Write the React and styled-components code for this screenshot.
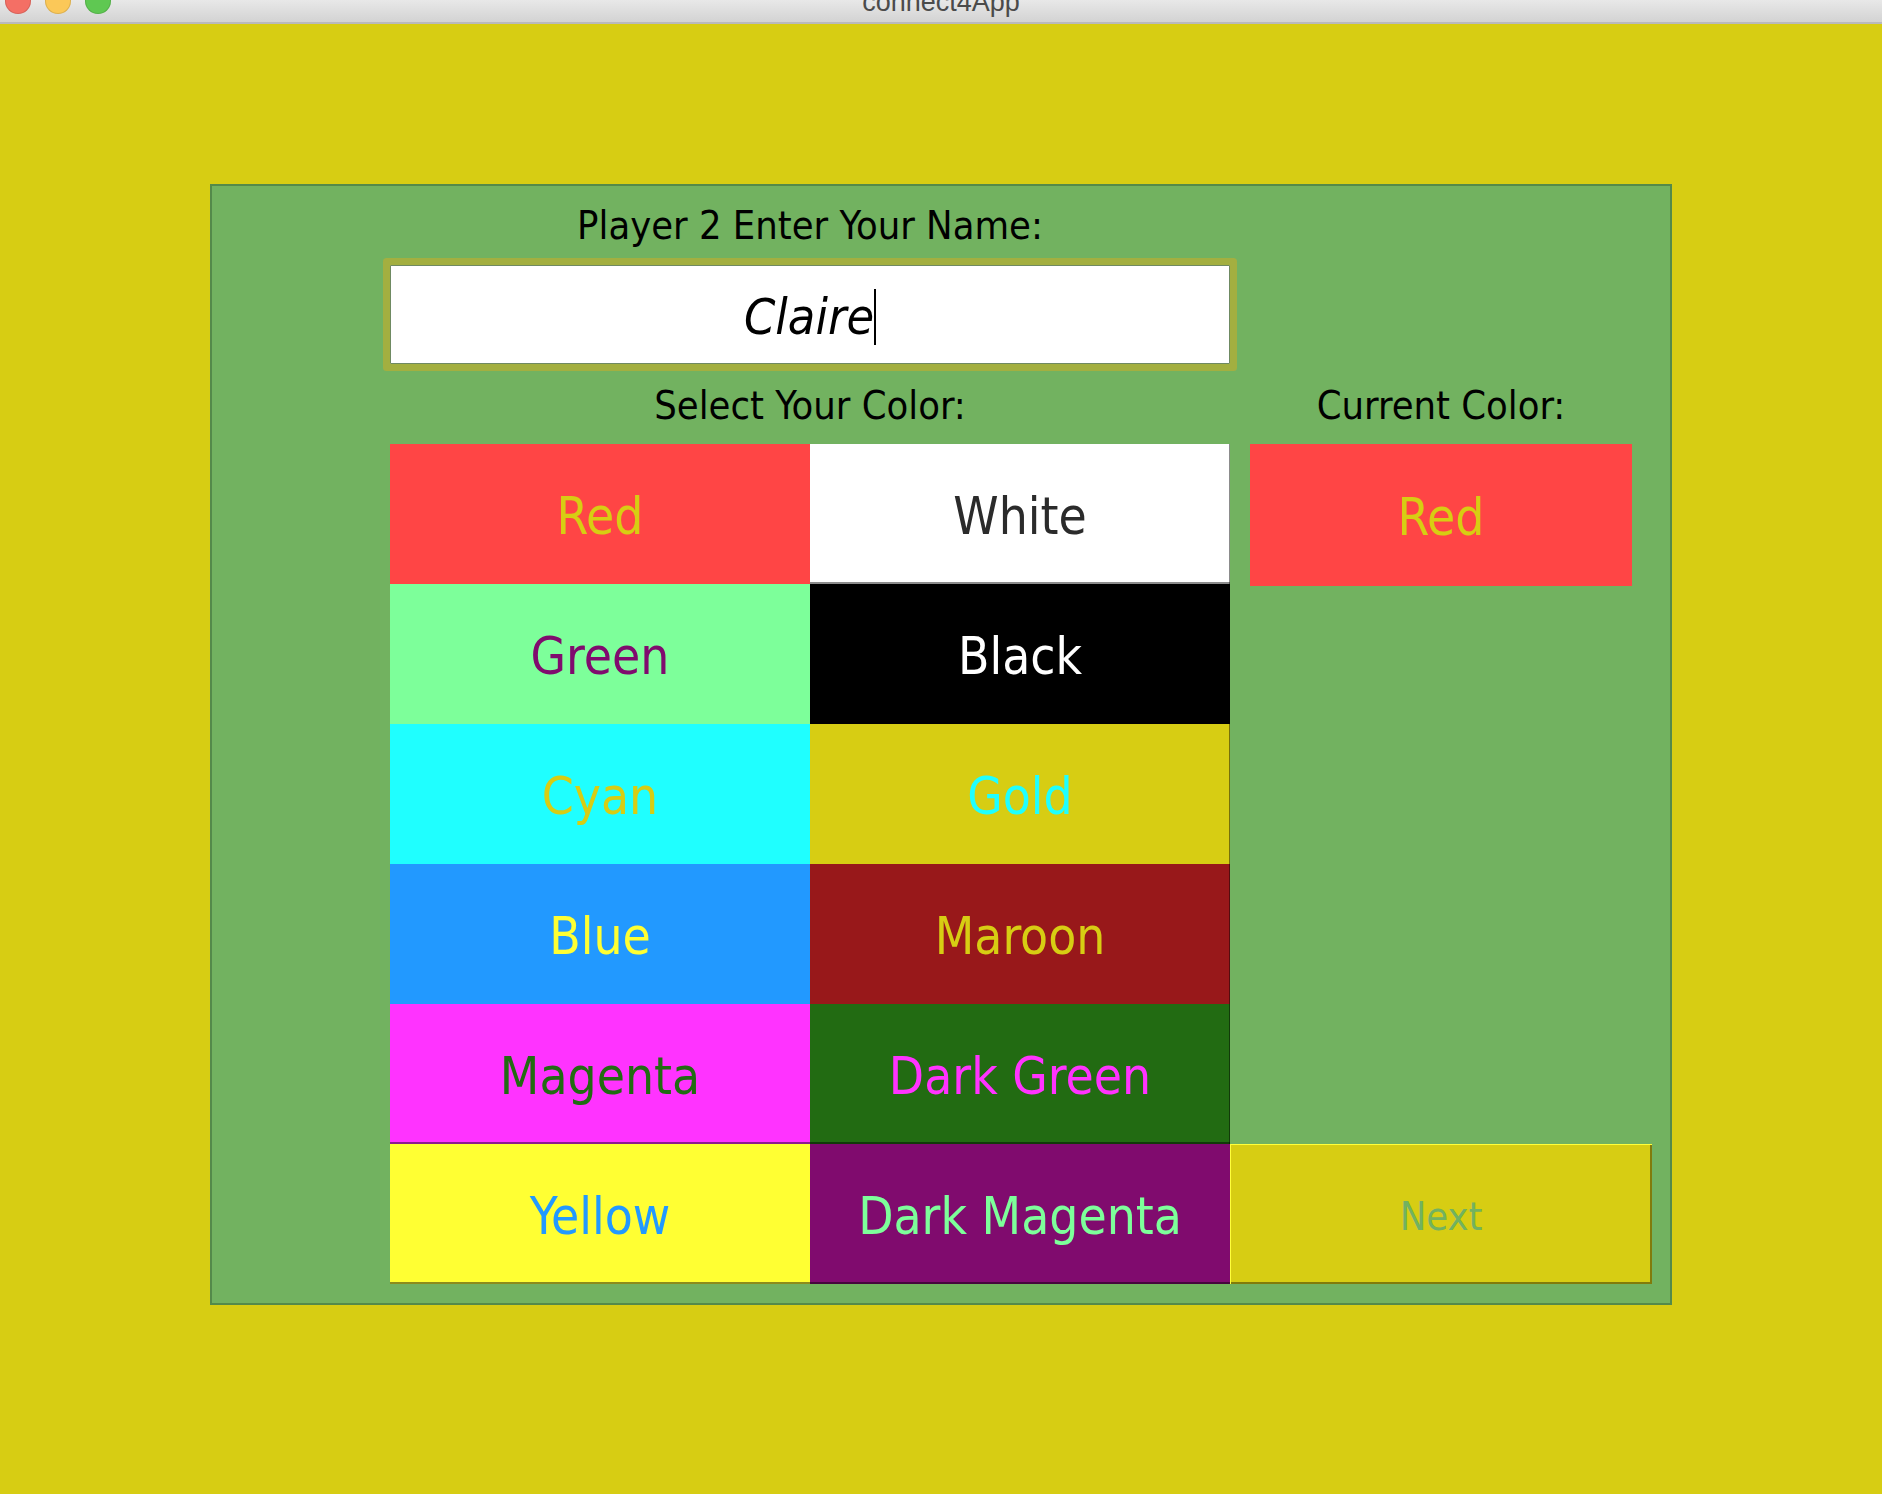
import React from 'react';
import styled, { createGlobalStyle } from 'styled-components';

const GlobalStyle = createGlobalStyle`
  html, body {
    margin: 0;
    padding: 0;
    background: #d7cd13;
  }
  body {
    min-height: 1494px;
    font-family: "DejaVu Sans Condensed", "DejaVu Sans", sans-serif;
  }
`;

const Window = styled.div`
  width: 1882px;
  min-height: 1494px;
  background: #d7cd13;
`;

const TitleBar = styled.div`
  display: grid;
  grid-template-columns: 1fr auto 1fr;
  height: 22px;
  overflow: hidden;
  background: linear-gradient(#e8e8e8, #d3d3d3);
  border-bottom: 2px solid #bababa;
`;

const Lights = styled.div`
  display: flex;
  gap: 14px;
  margin: -12px 0 0 5px;
`;

const Light = styled.span`
  width: 26px;
  height: 26px;
  border-radius: 50%;
  background: ${p => p.$color};
  box-shadow: inset 0 0 0 1px rgba(0, 0, 0, 0.12);
`;

const Title = styled.div`
  margin-top: -11px;
  font-family: "Liberation Sans", Arial, sans-serif;
  font-size: 27px;
  line-height: 27px;
  color: #4b4b4b;
`;

const Stage = styled.div`
  padding: 160px 0 0 210px;
`;

const Panel = styled.div`
  box-sizing: border-box;
  width: 1462px;
  display: grid;
  grid-template-columns: 420px 420px 422px;
  grid-template-rows: 72px 114px 72px repeat(6, 140px);
  padding: 0 18px 19px 178px;
  background: #72b260;
  border: 2px solid #548a4a;
`;

const Label = styled.div`
  grid-column: ${p => p.$col};
  grid-row: ${p => p.$row};
  align-self: center;
  text-align: center;
  font-size: 39.5px;
  color: #000;
  padding-top: ${p => p.$drop || 0}px;
  padding-bottom: ${p => p.$lift || 0}px;
`;

const NameField = styled.div`
  grid-column: 1 / 3;
  grid-row: 2;
  align-self: start;
  margin-top: 7px;
  height: 99px;
  box-sizing: border-box;
  display: flex;
  align-items: center;
  justify-content: center;
  padding-top: 4px;
  background: #fff;
  border: 1px solid #6f8a62;
  border-radius: 1px;
  box-shadow: 0 0 0 7px #a3af40;
`;

const Typed = styled.span`
  font-style: italic;
  font-size: 50px;
  color: #000;
`;

const Caret = styled.span`
  display: inline-block;
  width: 2px;
  height: 56px;
  background: #000;
`;

const Swatch = styled.div`
  grid-column: ${p => p.$col};
  grid-row: ${p => p.$row};
  display: flex;
  align-items: center;
  justify-content: center;
  padding-top: 4px;
  background: ${p => p.$bg};
  color: ${p => p.$fg};
  font-size: 51px;
  box-shadow: ${p =>
    [
      p.$right ? 'inset -1px 0 0 rgba(0, 0, 0, 0.45)' : null,
      p.$bottom ? 'inset 0 -2px 0 rgba(0, 0, 0, 0.45)' : null,
    ]
      .filter(Boolean)
      .join(', ') || 'none'};
`;

const Current = styled(Swatch)`
  align-self: start;
  box-sizing: border-box;
  height: 142px;
  margin: 0 20px;
`;

const NextButton = styled.div`
  grid-column: 3;
  grid-row: 9;
  display: flex;
  align-items: center;
  justify-content: center;
  padding-top: 4px;
  background: #d7cd13;
  color: #72b260;
  font-size: 39.5px;
  box-shadow: inset 1px 1px 0 #ffff3a, inset -2px -2px 0 rgba(0, 0, 0, 0.4);
`;

const colors = [
  { name: 'Red', bg: '#ff4545', fg: '#d7cd13' },
  { name: 'White', bg: '#ffffff', fg: '#2b2b2b', right: true, bottom: true },
  { name: 'Green', bg: '#7dff9a', fg: '#800b6e' },
  { name: 'Black', bg: '#000000', fg: '#ffffff' },
  { name: 'Cyan', bg: '#1fffff', fg: '#d7cd13' },
  { name: 'Gold', bg: '#d7cd13', fg: '#1fffff', right: true },
  { name: 'Blue', bg: '#2299ff', fg: '#ffff33' },
  { name: 'Maroon', bg: '#98181a', fg: '#d7cd13', right: true },
  { name: 'Magenta', bg: '#ff33ff', fg: '#226b12', bottom: true },
  { name: 'Dark Green', bg: '#226b12', fg: '#ff33ff', right: true, bottom: true },
  { name: 'Yellow', bg: '#ffff33', fg: '#2299ff', bottom: true },
  { name: 'Dark Magenta', bg: '#800b6e', fg: '#7dff9a', bottom: true },
];

const App = () => {
  return (
    <Window>
      <GlobalStyle />
      <TitleBar>
        <Lights>
          <Light $color="#f46f65" />
          <Light $color="#fbc858" />
          <Light $color="#5fc852" />
        </Lights>
        <Title>connect4App</Title>
        <span />
      </TitleBar>
      <Stage>
        <Panel>
          <Label $col="1 / 3" $row={1} $drop={6}>Player 2 Enter Your Name:</Label>
          <NameField>
            <Typed>Claire</Typed>
            <Caret />
          </NameField>
          <Label $col="1 / 3" $row={3} $lift={6}>Select Your Color:</Label>
          <Label $col="3" $row={3} $lift={6}>Current Color:</Label>
          {colors.map((c, i) => (
            <Swatch
              key={c.name}
              $col={(i % 2) + 1}
              $row={Math.floor(i / 2) + 4}
              $bg={c.bg}
              $fg={c.fg}
              $right={c.right}
              $bottom={c.bottom}
            >
              {c.name}
            </Swatch>
          ))}
          <Current $col={3} $row={4} $bg="#ff4545" $fg="#d7cd13">Red</Current>
          <NextButton>Next</NextButton>
        </Panel>
      </Stage>
    </Window>
  );
};

export default App;
